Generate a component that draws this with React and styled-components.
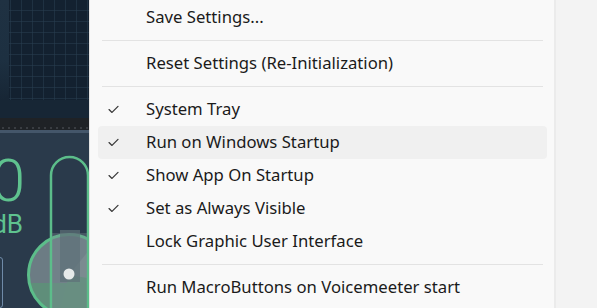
import React from 'react';
import styled, { createGlobalStyle } from 'styled-components';

const GlobalStyle = createGlobalStyle`
  html, body {
    margin: 0;
    padding: 0;
    width: 597px;
    height: 308px;
    overflow: hidden;
    background: #f3f3f3;
  }
`;

// menu entries, null = separator
const items = [
  { label: 'Save Settings...' },
  null,
  { label: 'Reset Settings (Re-Initialization)' },
  null,
  { label: 'System Tray', checked: true },
  { label: 'Run on Windows Startup', checked: true, hover: true },
  { label: 'Show App On Startup', checked: true },
  { label: 'Set as Always Visible', checked: true },
  { label: 'Lock Graphic User Interface' },
  null,
  { label: 'Run MacroButtons on Voicemeeter start' },
];

function Check() {
  return (
    <svg width="11" height="9" viewBox="0 0 11 9">
      <path d="M1 4.6 L4 7.4 L10 1.4" fill="none" stroke="#3a3a3a" strokeWidth="1.3" strokeLinecap="round" strokeLinejoin="round" />
    </svg>
  );
}

function Fader() {
  return (
    <svg width="62" height="175" viewBox="0 0 62 175">
      <defs>
        <clipPath id="knob">
          <circle cx="42" cy="142" r="41" />
        </clipPath>
      </defs>
      <circle cx="42" cy="142" r="41" fill="#6c7c84" />
      <g clipPath="url(#knob)">
        <polygon points="42,142 80,95 90,95 90,190" fill="#7b8a90" />
        <polygon points="42,142 90,150 90,190 30,190" fill="#5f907a" />
        <rect x="0" y="150" width="90" height="40" fill="#5e9079" opacity="0.9" />
      </g>
      <circle cx="42" cy="142" r="40.5" fill="none" stroke="#5cbd8a" strokeWidth="3" />
      <rect x="24" y="24" width="37" height="200" rx="18.5" fill="none" stroke="#5cbd8a" strokeWidth="2.5" />
      <rect x="25" y="100" width="35" height="110" fill="#7a8c92" opacity="0.35" />
      <rect x="33" y="97" width="20" height="52" fill="#5e7178" opacity="0.7" />
      <circle cx="42" cy="141" r="5.5" fill="#e6eaea" />
    </svg>
  );
}

export default function App() {
  return (
    <>
      <GlobalStyle />
      <Page>
        <Mixer>
          <Display>
            <Edge />
            <Grid />
          </Display>
          <Rail />
          <RailLip />
          <Channel>
            <Readout>
              <Gain>0</Gain>
              <Unit>dB</Unit>
              <Slot />
            </Readout>
            <Fader />
          </Channel>
        </Mixer>
        <Menu>
          {items.map((item, i) =>
            item === null ? (
              <Separator key={i} />
            ) : (
              <Item key={i} $hover={item.hover}>
                <Mark>{item.checked && <Check />}</Mark>
                <Label>{item.label}</Label>
              </Item>
            )
          )}
        </Menu>
        <Gutter />
      </Page>
    </>
  );
}

const Page = styled.div`
  display: flex;
  width: 597px;
  height: 308px;
  overflow: hidden;
`;

const Mixer = styled.div`
  width: 89px;
  flex-shrink: 0;
  display: flex;
  flex-direction: column;
  background: #2a3a4a;
  overflow: hidden;
`;

const Display = styled.div`
  height: 118px;
  flex-shrink: 0;
  display: flex;
  background: #172635;
`;

const Edge = styled.div`
  width: 9px;
  height: 100px;
  background: linear-gradient(180deg, #1f3142 0%, #1d3041 60%, #172635 100%);
  border-bottom-right-radius: 9px;
`;

const Grid = styled.div`
  flex: 1;
  height: 100px;
  background-color: #132130;
  background-image:
    linear-gradient(90deg, rgba(40, 62, 80, 0.55) 1px, transparent 1px),
    linear-gradient(0deg, rgba(40, 62, 80, 0.55) 1px, transparent 1px);
  background-size: 11px 11px;
  background-position: 1px 0;
`;

const Rail = styled.div`
  height: 12px;
  flex-shrink: 0;
  background: #1f2226;
  background-image: radial-gradient(circle, #3a3d42 0.8px, transparent 1px);
  background-size: 6px 4px;
  background-position: 0 8px;
  background-repeat: repeat-x;
`;

const RailLip = styled.div`
  height: 3px;
  flex-shrink: 0;
  background: #44566a;
`;

const Channel = styled.div`
  flex: 1;
  min-height: 0;
  display: flex;
  background: #2a3a4b;
`;

const Readout = styled.div`
  width: 27px;
  flex-shrink: 0;
  display: flex;
  flex-direction: column;
  align-items: flex-end;
  padding-top: 18px;
  font-family: Roboto, sans-serif;
  color: #5fc38f;
`;

const Gain = styled.div`
  font-size: 60px;
  line-height: 60px;
  font-weight: 300;
  margin-right: 2px;
`;

const Unit = styled.div`
  font-size: 26px;
  line-height: 26px;
  margin-right: 4px;
  margin-top: 0;
`;

const Slot = styled.div`
  align-self: flex-start;
  margin-top: 20px;
  margin-left: -3px;
  width: 4px;
  height: 60px;
  border: 1.5px solid #6f8aa8;
  border-radius: 3px;
`;

const Menu = styled.div`
  width: 465px;
  flex-shrink: 0;
  padding: 1px 7px 0 8px;
  background: #f9f9f9;
  border-left: 1px solid #e3e3e3;
  display: flex;
  flex-direction: column;
  box-sizing: border-box;
  font-family: 'Noto Sans', sans-serif;
  font-size: 16.7px;
  color: #1b1b1b;
`;

const Item = styled.div`
  height: 33px;
  flex-shrink: 0;
  display: flex;
  align-items: center;
  border-radius: 4px;
  background: ${(p) => (p.$hover ? '#f0f0f0' : 'transparent')};
`;

const Mark = styled.div`
  width: 48px;
  padding-left: 10px;
  box-sizing: border-box;
  display: flex;
  align-items: center;
`;

const Label = styled.span`
  white-space: nowrap;
  margin-top: -2px;
`;

const Separator = styled.div`
  height: 1px;
  flex-shrink: 0;
  margin: 6px 4px 6px 4px;
  background: #e3e3e3;
`;

const Gutter = styled.div`
  flex: 1;
  background: #f3f3f3;
  border-left: 2px solid #ebebeb;
`;
